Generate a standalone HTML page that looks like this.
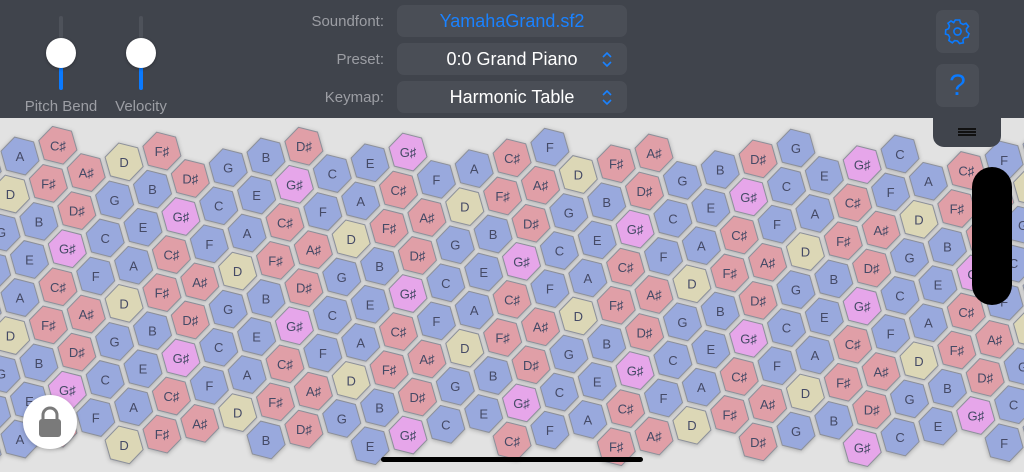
<!DOCTYPE html>
<html><head><meta charset="utf-8">
<style>
html,body{margin:0;padding:0;width:1024px;height:472px;overflow:hidden;background:#e2e2e2;font-family:"Liberation Sans","DejaVu Sans",sans-serif}
#bar{position:absolute;left:0;top:0;width:1024px;height:118px;background:#40444c}
.lbl{position:absolute;color:#9c9ea4;font-size:15px;text-align:right;width:120px;left:264px}
.fld{position:absolute;left:397px;width:230px;height:32px;background:#4a4e56;border-radius:7px;text-align:center;line-height:32px;font-size:18px;color:#fff}
.chev{position:absolute;right:14px;top:8px}
.btn{position:absolute;left:936px;width:43px;height:43px;background:#4a4e56;border-radius:7px}
.track{position:absolute;width:4px;top:16px;height:74px;background:#4e525a;border-radius:2px}
.blue{position:absolute;width:4px;top:66px;height:24px;background:#0a7aff;border-radius:2px}
.knob{position:absolute;width:30px;height:30px;border-radius:50%;background:#fff;top:38px;box-shadow:0 1px 3px rgba(0,0,0,.3)}
.sl{position:absolute;top:98px;color:#9c9ea4;font-size:15px;text-align:center;width:100px}
</style></head><body>
<svg id="grid" width="1024" height="472" style="position:absolute;left:0;top:0"></svg>
<div id="bar">
<div class="track" style="left:59px"></div><div class="blue" style="left:59px"></div><div class="knob" style="left:46px"></div>
<div class="track" style="left:139px"></div><div class="blue" style="left:139px"></div><div class="knob" style="left:126px"></div>
<div class="sl" style="left:11px">Pitch Bend</div><div class="sl" style="left:91px">Velocity</div>
<div class="lbl" style="top:13px">Soundfont:</div>
<div class="lbl" style="top:51px">Preset:</div>
<div class="lbl" style="top:89px">Keymap:</div>
<div class="fld" style="top:5px;color:#1a82ff">YamahaGrand.sf2</div>
<div class="fld" style="top:43px">0:0 Grand Piano<svg class="chev" width="12" height="17" viewBox="0 0 12 17"><path d="M2 6 L6 2 L10 6 M2 11 L6 15 L10 11" fill="none" stroke="#1a82ff" stroke-width="1.6"/></svg></div>
<div class="fld" style="top:81px">Harmonic Table<svg class="chev" width="12" height="17" viewBox="0 0 12 17"><path d="M2 6 L6 2 L10 6 M2 11 L6 15 L10 11" fill="none" stroke="#1a82ff" stroke-width="1.6"/></svg></div>
<div class="btn" style="top:10px"><svg width="43" height="43" viewBox="0 0 43 43"><g transform="translate(21.5,21.5)" fill="none" stroke="#0a7aff" stroke-width="1.6">
<path d="M-2.2,-11.5 L2.2,-11.5 L3,-8.4 L5.6,-7 L8.6,-8.3 L11,-5.2 L8.9,-2.7 L9.1,0 L11.5,2.2 L10.3,5.8 L7.1,6.2 L5.4,8.5 L5.8,11.3 L2,12 L0,9.5 L-2.9,9.1 L-5.2,11.3 L-8.6,9 L-7.8,5.9 L-9.2,3.4 L-12,2.5 L-11.8,-1.6 L-8.9,-2.8 L-8,-5.6 L-9.5,-8.3 L-6.5,-10.5 L-3.8,-8.9 Z" />
<circle r="3.6"/></g></svg></div>
<div class="btn" style="top:64px;color:#0a7aff;font-size:30px;text-align:center;line-height:43px">?</div>
</div>
<div style="position:absolute;left:933px;top:110px;width:68px;height:37px;background:#40444c;border-radius:0 0 11px 11px"></div>
<div style="position:absolute;left:958px;top:128px;width:18px;height:1.5px;background:#111;box-shadow:0 3px 0 #111,0 6px 0 #111"></div>
<div style="position:absolute;left:972px;top:167px;width:40px;height:138px;background:#000;border-radius:20px"></div>
<div style="position:absolute;left:23px;top:395px;width:54px;height:54px;border-radius:50%;background:#fff;box-shadow:0 1px 4px rgba(0,0,0,.25)">
<svg width="54" height="54" viewBox="0 0 54 54"><path d="M20 25 V20 a7 7 0 0 1 14 0 V25" fill="none" stroke="#7a7a7a" stroke-width="3"/><rect x="16" y="24" width="22" height="18" rx="3" fill="#7a7a7a"/></svg></div>
<div style="position:absolute;left:381px;top:457px;width:262px;height:5px;background:#000;border-radius:3px"></div>
<script>
var names=['C','C♯','D','D♯','E','F','F♯','G','G♯','A','A♯','B'];
function col(n){if(n==2)return '#dcd7b6';if(n==8)return '#e6a6ea';if([1,3,6,10].indexOf(n)>=0)return '#e09fa7';return '#99a9dd';}
var ox=20,oy=156,ux=37.85,uy=-10.74,vx=28.39,vy=27.32,R=19.6,s='';
var pts=[];for(var k=0;k<6;k++){var t=(14.1+60*k)*Math.PI/180;pts.push([R*Math.cos(t),R*Math.sin(t)]);}
for(var a=-20;a<40;a++)for(var b=-20;b<40;b++){
var x=ox+a*ux+b*vx,y=oy+a*uy+b*vy;if(x<-30||x>1055||y<144||y>450)continue;
var n=((9+4*a-3*b)%12+120)%12;
var p=pts.map(function(q){return (x+q[0]).toFixed(1)+','+(y+q[1]).toFixed(1)}).join(' ');
s+='<polygon points="'+p+'" fill="'+col(n)+'" stroke="#8c909a" stroke-width="1" style="filter:drop-shadow(0 1px 2px rgba(0,0,0,.25))"/>';
s+='<text x="'+x.toFixed(1)+'" y="'+(y+5).toFixed(1)+'" text-anchor="middle" font-size="13" fill="#454a66" font-family="Liberation Sans,DejaVu Sans,sans-serif">'+names[n]+'</text>';}
document.getElementById('grid').innerHTML=s;
</script>
</body></html>
